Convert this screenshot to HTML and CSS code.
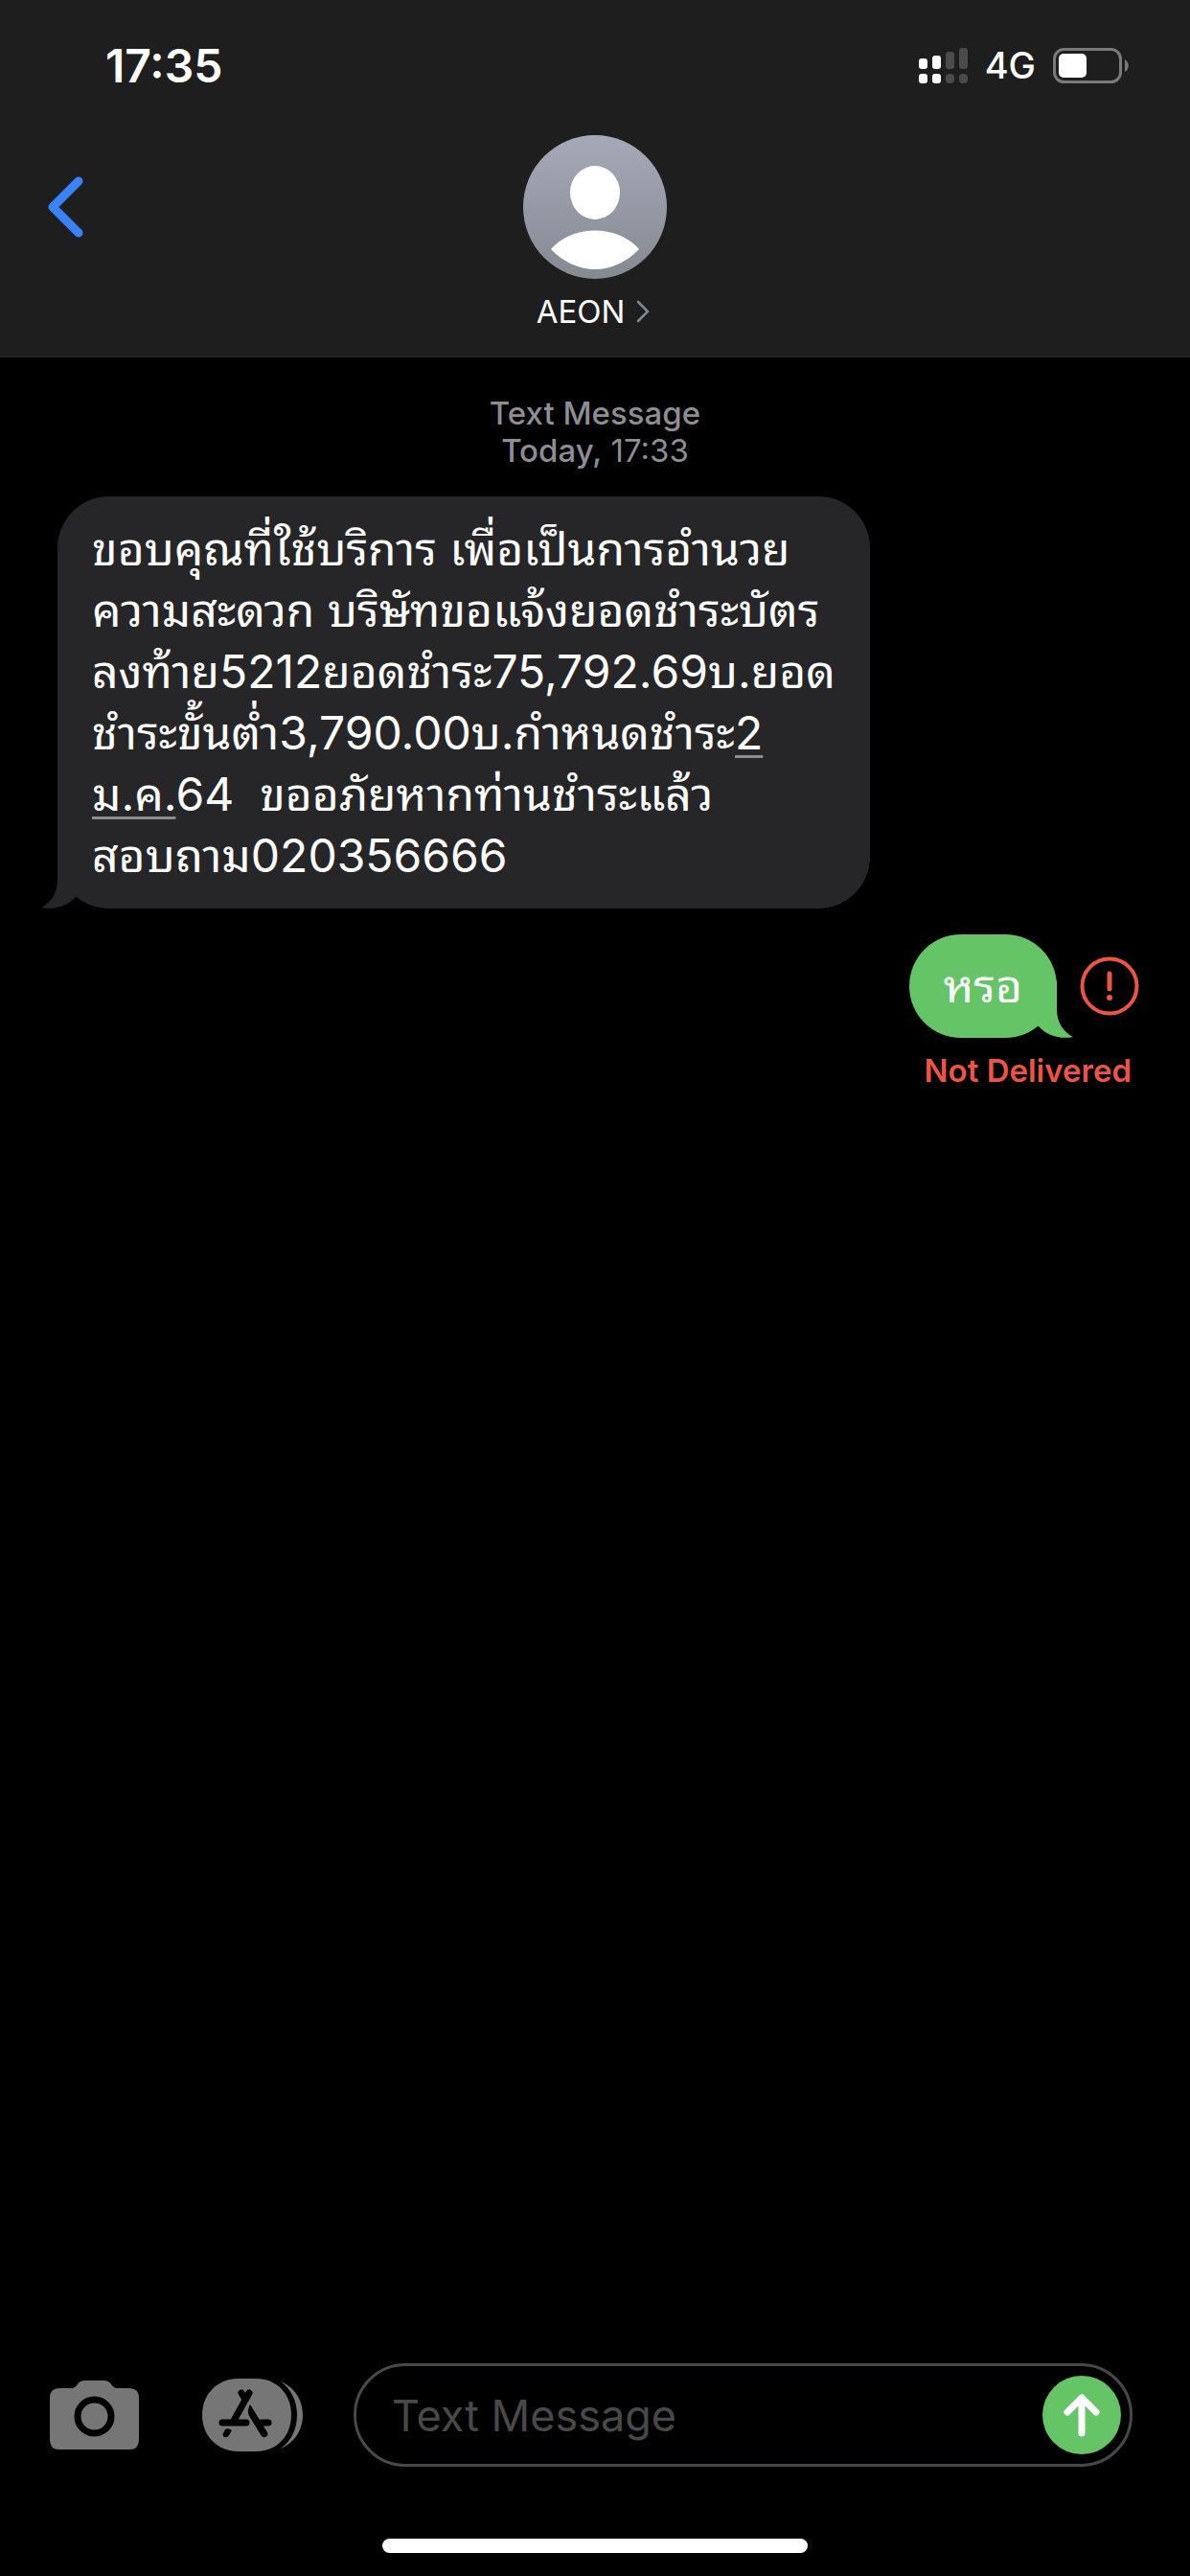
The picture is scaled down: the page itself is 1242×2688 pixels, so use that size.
FILE: index.html
```html
<!DOCTYPE html>
<html lang="th">
  <head>
    <meta charset="UTF-8" />
    <meta name="viewport" content="width=device-width, initial-scale=1.0" />
    <title>AEON</title>
    <link rel="stylesheet" href="styles.css">
  </head>
  <body>
    <header class="header">
      <div class="status-bar">
        <span class="time">17:35</span>
        <div class="status-icons">
          <svg class="signal" width="51" height="37" viewBox="0 0 51 37" fill="#fff">
            <rect x="0" y="11" width="9" height="11" rx="3" />
            <rect x="14" y="8" width="9" height="14" rx="3" />
            <rect x="28" y="4" width="9" height="18" rx="3" fill="#4b4b4b" />
            <rect x="42" y="0" width="9" height="22" rx="3" fill="#4b4b4b" />
            <rect x="0" y="27" width="9" height="10" rx="3" />
            <rect x="14" y="27" width="9" height="10" rx="3" />
            <rect x="28" y="27" width="9" height="10" rx="4" fill="#4b4b4b" />
            <rect x="42" y="27" width="9" height="10" rx="4" fill="#4b4b4b" />
          </svg>
          <span class="network">4G</span>
          <svg class="battery" width="80" height="37" viewBox="0 0 80 37">
            <rect x="1.5" y="1.5" width="69" height="34" rx="10" fill="none" stroke="#7a7a7a" stroke-width="3" />
            <rect x="6" y="6" width="29" height="25" rx="5" fill="#fff" />
            <path d="M75 12 C80 15 80 22 75 25 Z" fill="#7a7a7a" />
          </svg>
        </div>
      </div>
      <nav class="nav">
        <button class="back" aria-label="Back">
          <svg width="38" height="64" viewBox="0 0 38 64" fill="none" stroke="#3a82f7" stroke-width="9" stroke-linecap="round" stroke-linejoin="round">
            <path d="M32 5 L5 32 L32 59" />
          </svg>
        </button>
        <button class="contact">
          <svg class="avatar" width="150" height="150" viewBox="0 0 150 150">
            <defs>
              <linearGradient id="avatar-bg" x1="0" y1="0" x2="0" y2="1">
                <stop offset="0" stop-color="#a6aab8" />
                <stop offset="1" stop-color="#858991" />
              </linearGradient>
            </defs>
            <circle cx="75" cy="75" r="75" fill="url(#avatar-bg)" />
            <ellipse cx="75" cy="60" rx="26" ry="28" fill="#fff" />
            <path d="M29 119 C52 93 98 93 121 119 C94 147 56 147 29 119 Z" fill="#fff" />
          </svg>
          <span class="contact-name">
            AEON
            <svg width="18" height="24" viewBox="0 0 18 24" fill="none" stroke="#828b95" stroke-width="2.5" stroke-linecap="round">
              <path d="M2 2 L12 12 L2 22" />
            </svg>
          </span>
        </button>
      </nav>
    </header>

    <main class="messages">
      <p class="timestamp"><b>Text Message</b><br><b>Today,</b> 17:33</p>

      <div class="row received">
        <p class="bubble">ขอบคุณที่ใช้บริการ เพื่อเป็นการอำนวย<br>ความสะดวก บริษัทขอแจ้งยอดชำระบัตร<br>ลงท้าย5212ยอดชำระ75,792.69บ.ยอด<br>ชำระขั้นต่ำ3,790.00บ.กำหนดชำระ<a href="#">2<br>ม.ค.</a>64&nbsp; ขออภัยหากท่านชำระแล้ว<br>สอบถาม020356666
          <svg class="tail" width="50" height="60" viewBox="0 0 50 60">
            <path d="M17 0 V30 C17 44 10 54 0 59 C14 62 28 57 36 48 L46 30 Z" />
          </svg>
        </p>
      </div>

      <div class="row sent">
        <p class="bubble">หรอ
          <svg class="tail" width="50" height="60" viewBox="0 0 50 60">
            <path d="M17 0 V30 C17 44 10 54 0 59 C14 62 28 57 36 48 L46 30 Z" />
          </svg>
        </p>
        <button class="alert" aria-label="Not delivered">
          <svg width="62" height="62" viewBox="0 0 62 62" fill="none" stroke="#ea5545" stroke-linecap="round">
            <circle cx="31" cy="31" r="28.5" stroke-width="4" />
            <path d="M31 18 V34" stroke-width="5" />
            <circle cx="31" cy="43" r="3" fill="#ea5545" stroke="none" />
          </svg>
        </button>
      </div>
      <p class="not-delivered">Not Delivered</p>
    </main>

    <footer class="footer">
      <form class="composer">
        <button class="tool" type="button" aria-label="Camera">
          <svg width="93" height="72" viewBox="0 0 93 72">
            <path d="M10 8 H22 C26 8 27 6 29 4 C31 1 33 0 37 0 H56 C60 0 62 1 64 4 C66 6 67 8 71 8 H83 Q93 8 93 18 V62 Q93 72 83 72 H10 Q0 72 0 62 V18 Q0 8 10 8 Z" fill="#767676" />
            <circle cx="46.5" cy="37.5" r="17.5" fill="none" stroke="#000" stroke-width="7" />
          </svg>
        </button>
        <button class="tool" type="button" aria-label="Apps">
          <svg width="105" height="76" viewBox="0 0 105 76">
            <path d="M38 0 H56 C78 0 93 16 93 38 C93 60 78 76 56 76 H38 C16 76 0 60 0 38 C0 16 16 0 38 0 Z" fill="#767676" />
            <path d="M82 3 C96 9 105 22 105 38 C105 54 96 67 82 73 C93 65 99 53 99 38 C99 23 93 11 82 3 Z" fill="#767676" />
            <g fill="none" stroke="#000" stroke-width="7" stroke-linecap="round">
              <path d="M49 15 L33 44" />
              <path d="M41 15 L44 20" />
              <path d="M21 46 H46" />
              <path d="M62 46 H69" />
            </g>
            <path d="M50 27 C48 31 47 35 49 39 L62 60 C65 63 70 60 68 56 Z" />
            <path d="M24 53 Q27 51 31 54 L28 59 C26 63 20 61 22 57 Z" />
          </svg>
        </button>
        <div class="field">
          <input type="text" aria-label="Text Message" placeholder="Text Message" />
          <button class="send" type="button" aria-label="Send">
            <svg width="38" height="46" viewBox="0 0 38 46" fill="none" stroke="#fff" stroke-width="7" stroke-linecap="round" stroke-linejoin="round">
              <path d="M4 20 L19 5 L34 20 M19 5 V42" />
            </svg>
          </button>
        </div>
      </form>
      <div class="home-indicator"></div>
    </footer>
  </body>
</html>
```
FILE: styles.css
```css
* {
  box-sizing: border-box;
}
body {
  display: flex;
  flex-direction: column;
  min-height: 100vh;
  margin: 0;
  background-color: #000;
  color: #fff;
  font-family: Inter, "Noto Sans Thai Looped", Loma, Waree, Garuda, "Noto Sans Thai", "Noto Sans", sans-serif;
}
p {
  margin: 0;
}
svg {
  display: block;
}
button {
  padding: 0;
  border: none;
  background: none;
  color: inherit;
  font: inherit;
  cursor: pointer;
}

/* header */
.header {
  background-color: #1e1e1e;
  border-bottom: 1px solid #262626;
}
.status-bar {
  display: flex;
  justify-content: space-between;
  align-items: center;
  height: 136px;
  padding: 0 63px 0 110px;
}
.time {
  font-size: 48px;
  font-weight: 600;
}
.status-icons {
  display: flex;
  align-items: center;
  gap: 18px;
}
.network {
  font-size: 38px;
  font-weight: 500;
}
.nav {
  display: grid;
  grid-template-columns: 1fr auto 1fr;
  align-items: start;
  padding: 5px 50px 27px;
}
.back {
  display: flex;
  align-items: center;
  width: 60px;
  height: 150px;
}
.contact {
  display: flex;
  flex-direction: column;
  align-items: center;
  gap: 14px;
}
.contact-name {
  display: flex;
  align-items: center;
  gap: 12px;
  font-size: 33px;
  line-height: 40px;
}

/* conversation */
.messages {
  flex: 1;
  padding-top: 39px;
}
.timestamp {
  margin-bottom: 28px;
  color: #8d8d92;
  font-size: 33px;
  line-height: 39px;
  text-align: center;
}
.timestamp b {
  font-weight: 500;
}
.row {
  display: flex;
  align-items: center;
  padding: 0 53px 0 60px;
}
.sent {
  justify-content: flex-end;
  gap: 24px;
  margin-top: 27px;
}
.bubble {
  position: relative;
  padding: 23px 36px;
  border-radius: 54px;
  font-size: 48px;
  line-height: 64px;
}
.received .bubble {
  background-color: #262628;
  fill: #262628;
  white-space: nowrap;
}
.sent .bubble {
  padding: 22px 36px;
  background-color: #65c466;
  fill: #65c466;
}
.bubble a {
  color: inherit;
  text-decoration: underline 3px #8c8c8e;
  text-underline-offset: 6px;
  text-decoration-skip-ink: none;
}
.tail {
  position: absolute;
  bottom: 0;
  left: -17px;
}
.sent .tail {
  right: -17px;
  left: auto;
  transform: scaleX(-1);
}
.not-delivered {
  margin-top: 15px;
  padding-right: 61px;
  color: #ea5545;
  font-size: 33px;
  font-weight: 600;
  line-height: 39px;
  text-align: right;
}

/* bottom bar */
.composer {
  display: flex;
  align-items: center;
  gap: 53px;
  padding: 0 60px 0 52px;
}
.composer .tool:first-child {
  margin-right: 13px;
}
.field {
  display: flex;
  flex: 1;
  align-items: center;
  min-width: 0;
  height: 108px;
  padding: 0 9px 0 37px;
  border: 3px solid #48484a;
  border-radius: 54px;
}
.field input {
  flex: 1;
  min-width: 0;
  padding: 0;
  border: none;
  outline: none;
  background: none;
  color: #fff;
  font-family: inherit;
  font-size: 45px;
}
.field input::placeholder {
  color: #48484a;
}
.send {
  display: flex;
  justify-content: center;
  align-items: center;
  width: 82px;
  height: 82px;
  border-radius: 50%;
  background-color: #65c466;
}
.home-indicator {
  width: 444px;
  height: 15px;
  margin: 75px auto 24px;
  border-radius: 8px;
  background-color: #fff;
}
```
